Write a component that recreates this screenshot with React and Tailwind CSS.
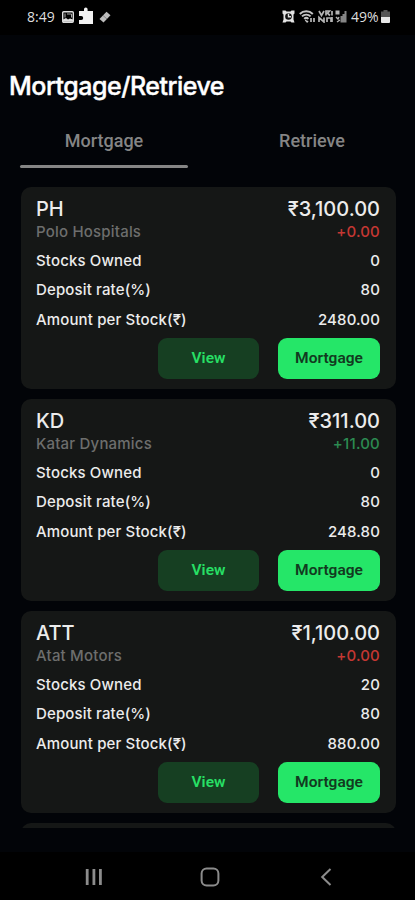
import React, { useState } from "react";
import clsx from "clsx";

const stocks = [
  {
    symbol: "PH",
    name: "Polo Hospitals",
    price: "₹3,100.00",
    change: "+0.00",
    up: false,
    owned: "0",
    rate: "80",
    amount: "2480.00",
  },
  {
    symbol: "KD",
    name: "Katar Dynamics",
    price: "₹311.00",
    change: "+11.00",
    up: true,
    owned: "0",
    rate: "80",
    amount: "248.80",
  },
  {
    symbol: "ATT",
    name: "Atat Motors",
    price: "₹1,100.00",
    change: "+0.00",
    up: false,
    owned: "20",
    rate: "80",
    amount: "880.00",
  },
];

const tabs = ["Mortgage", "Retrieve"];

export default function App() {
  const [activeTab, setActiveTab] = useState("Mortgage");

  return (
    <div className="flex h-[900px] w-[415px] flex-col overflow-hidden bg-[#020408] font-['Inter',sans-serif] text-[#ececec]">
      <StatusBar />
      <h1 className="mt-[35px] pl-[9px] text-[25px] leading-[32px] font-medium tracking-[-0.5px] text-white [-webkit-text-stroke:0.4px_white]">
        Mortgage/Retrieve
      </h1>
      <div className="mt-[20px] flex h-[46px]">
        {tabs.map((tab) => (
          <button
            key={tab}
            onClick={() => setActiveTab(tab)}
            className="flex flex-1 flex-col items-center justify-between px-5 pt-[7px] font-['Roboto',sans-serif] text-[18px] leading-[24px] font-medium text-[#858585]"
          >
            {tab}
            <span
              className={clsx(
                "h-[3px] w-[168px] rounded-sm",
                activeTab === tab ? "bg-[#858585]" : "bg-transparent"
              )}
            />
          </button>
        ))}
      </div>
      <div className="mt-[19px] ml-[21px] flex h-[641px] w-[375px] shrink-0 flex-col gap-[10px] overflow-hidden">
        {stocks.map((stock) => (
          <StockCard key={stock.symbol} stock={stock} />
        ))}
        <div className="h-[202px] shrink-0 rounded-[10px] bg-[#151716]" />
      </div>
      <NavBar />
    </div>
  );
}

function StockCard({ stock }) {
  return (
    <div className="flex h-[202px] shrink-0 flex-col rounded-[10px] bg-[#151716] pt-[10px] pr-4 pl-[15px]">
      <div className="flex justify-between text-[20px] leading-[24px] font-[450]">
        <span>{stock.symbol}</span>
        <span>{stock.price}</span>
      </div>
      <div className="flex justify-between text-[15px] leading-[21px] font-[450] tracking-[0.2px]">
        <span className="text-[#6d6e6d]">{stock.name}</span>
        <span className={stock.up ? "text-[#2c8a51]" : "text-[#c53733]"}>
          {stock.change}
        </span>
      </div>
      <div className="mt-[4px] flex flex-col text-[15px] leading-[29.3px] font-medium tracking-[0.14px]">
        <Row label="Stocks Owned" value={stock.owned} />
        <Row label="Deposit rate(%)" value={stock.rate} />
        <Row label="Amount per Stock(₹)" value={stock.amount} />
      </div>
      <div className="mt-[4px] flex justify-end gap-[19px] font-['Roboto',sans-serif] text-[15.5px] font-semibold">
        <button className="h-[41px] w-[101px] rounded-[9px] bg-[#163f22] text-[#27df65]">
          View
        </button>
        <button className="h-[41px] w-[102px] rounded-[9px] bg-[#25e668] text-[#123a20]">
          Mortgage
        </button>
      </div>
    </div>
  );
}

function Row({ label, value }) {
  return (
    <div className="flex justify-between">
      <span>{label}</span>
      <span>{value}</span>
    </div>
  );
}

function StatusBar() {
  return (
    <div className="flex h-[35px] shrink-0 items-center bg-black pr-[25px] pb-[2px] pl-[27px] font-['Open_Sans',sans-serif] text-[14px] text-[#dedede]">
      <span className="w-[35px]">8:49</span>
      <svg className="h-[12px] w-[12px]" viewBox="0 0 12 12">
        <rect x="0.7" y="0.7" width="10.6" height="10.6" rx="1" fill="none" stroke="#dedede" strokeWidth="1.4" />
        <path d="M3 2.5v4M5 3h4.5v3.5" fill="none" stroke="#aaa" strokeWidth="1" />
        <path d="M1 10.8V8.5l3-1.5 2 1.5 2-1 3 1v2.3z" fill="#dedede" />
      </svg>
      <svg className="mb-[1px] ml-[4px] h-[18px] w-[16px]" viewBox="0 0 16 18">
        <path
          d="M1 4h5V2.2a1.8 1.8 0 0 1 3.6 0V4H15v13H1v-4h2.2a1.8 1.8 0 0 0 0-4H1z"
          fill="#f2f2f2"
        />
      </svg>
      <svg className="ml-[5px] h-[12px] w-[12px]" viewBox="0 0 12 12">
        <path d="M0.5 8 7.5 0.8 11.5 4.2 4.5 11.4z" fill="#bdbdbd" />
        <path d="M4 4.5 8 8" stroke="#777" strokeWidth="0.8" />
      </svg>
      <div className="ml-auto flex items-center">
        <svg className="h-[13px] w-[13px]" viewBox="0 0 13 13">
          <path d="M0.5 0.5h3l1 1h4l1-1h3v3l-1 1v5l1 3h-3l-1-1h-4l-1 1h-3l1-3v-5l-1-1z" fill="#e4e4e4" />
          <circle cx="6.5" cy="6.5" r="3.3" fill="#111" />
          <path d="M6.5 3.8v3h2.5" fill="none" stroke="#e4e4e4" strokeWidth="1.4" />
        </svg>
        <svg className="ml-[4px] h-[13px] w-[17px]" viewBox="0 0 17 13" fill="none" stroke="#c4c4c4">
          <path d="M0.8 4a9 9 0 0 1 13 0M3 6.4a6 6 0 0 1 8.6 0M5.2 8.9a3 3 0 0 1 4.2 0" strokeWidth="1.9" />
          <path d="m6.3 10 1.8 2 1-1.2" strokeWidth="1.3" />
          <path d="M12 8v4M15 8v4" strokeWidth="1.6" />
        </svg>
        <svg className="ml-[2px] h-[13px] w-[29px]" viewBox="0 0 29 13" fill="none" stroke="#b4b4b4">
          <path d="m1 1 2.5 4.5L6 1M8 5.5V1h3.5l-2 2.2 2.5 2.3M14 1v4.5M1 12V7.5l5 4.5V7.5M9 12V8h4v4M14 7v5" strokeWidth="1.7" />
          <path d="M18.5 0.5v4M20.5 0.5v4" strokeWidth="2" />
          <path d="m18 7 2 2 1-2M19 12l3-2" strokeWidth="1.4" />
          <path d="M23.5 12.5V6M25.5 12.5V4M27.5 12.5V1" stroke="#858585" strokeWidth="2" />
        </svg>
        <span className="ml-[4px] w-[30px]">49%</span>
        <svg className="h-[13px] w-[9px]" viewBox="0 0 9 13">
          <path d="M2.5 0h4v1.5H9V7H0V1.5h2.5z" fill="#555" />
          <path d="M0 7h9v5a1 1 0 0 1-1 1H1a1 1 0 0 1-1-1z" fill="#e8e8e8" />
        </svg>
      </div>
    </div>
  );
}

function NavBar() {
  return (
    <div className="mt-auto flex h-[48px] shrink-0 items-center justify-between bg-black pt-[1px] pr-[79px] pl-[84px] text-[#8c8c8c]">
      <svg className="h-5 w-5" viewBox="0 0 20 20" stroke="currentColor" strokeWidth="2.8">
        <path d="M3.2 2v16M9.9 2v16M16.4 2v16" />
      </svg>
      <svg className="h-5 w-5" viewBox="0 0 20 20" fill="none" stroke="currentColor" strokeWidth="2">
        <rect x="1.6" y="1.6" width="16.8" height="16.8" rx="5" />
      </svg>
      <svg className="h-5 w-5" viewBox="0 0 20 20" fill="none" stroke="currentColor" strokeWidth="2">
        <path d="M14.5 2 6.2 10l8.3 8" />
      </svg>
    </div>
  );
}
